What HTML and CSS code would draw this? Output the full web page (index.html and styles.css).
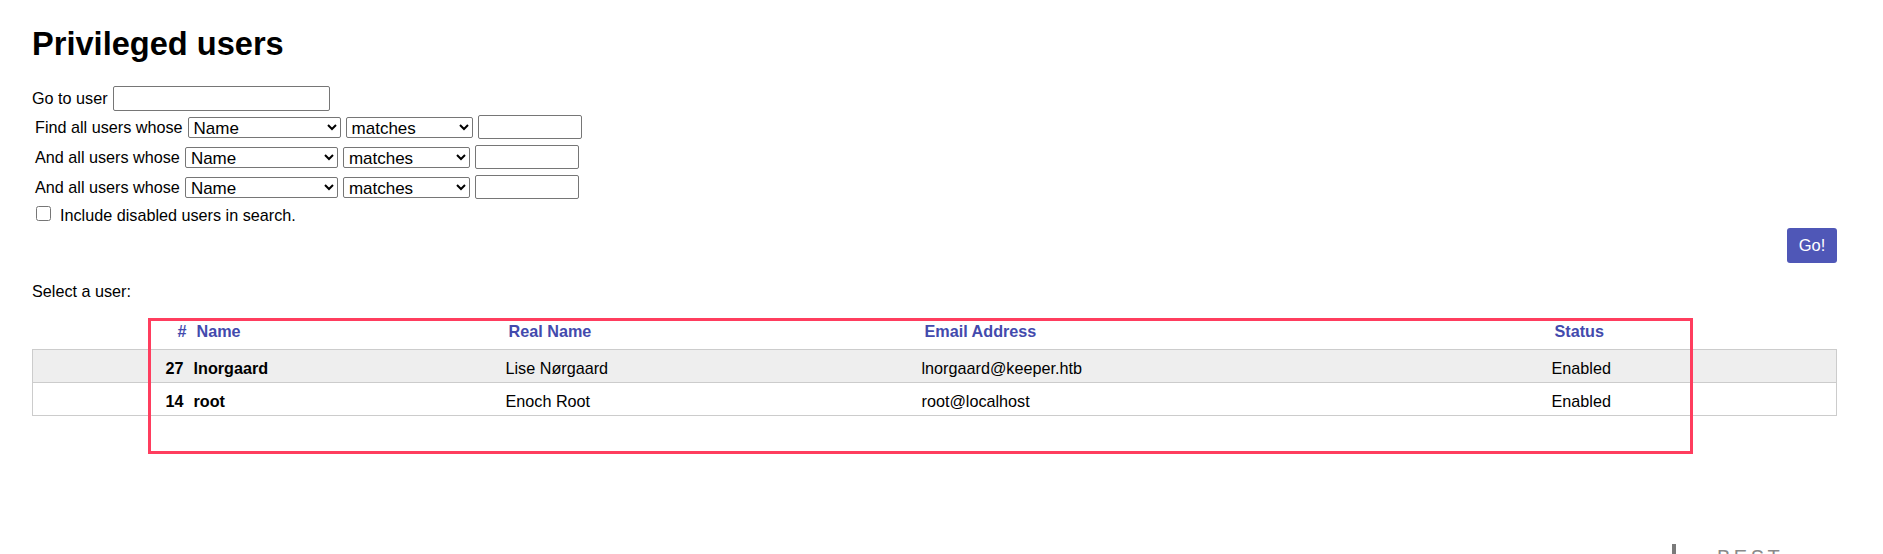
FILE: index.html
```html
<!DOCTYPE html>
<html lang="en">
<head>
<meta charset="utf-8">
<title>Privileged users</title>
<link rel="stylesheet" href="styles.css">
</head>
<body>
<div class="page">
  <h1 class="title">Privileged users</h1>

  <form class="search">
    <div class="goto">
      <label class="goto-label" for="goto">Go to user</label>
      <input class="goto-input" id="goto" type="text">
    </div>

    <div class="criteria">
      <div class="crit-row">
        <span class="crit-label">Find all users whose</span>
        <select class="field"><option selected>Name</option><option>EmailAddress</option><option>RealName</option></select>
        <select class="op"><option selected>matches</option><option>doesn't match</option><option>is</option><option>isn't</option></select>
        <input class="value" type="text">
      </div>
      <div class="crit-row">
        <span class="crit-label">And all users whose</span>
        <select class="field"><option selected>Name</option><option>EmailAddress</option><option>RealName</option></select>
        <select class="op"><option selected>matches</option><option>doesn't match</option><option>is</option><option>isn't</option></select>
        <input class="value" type="text">
      </div>
      <div class="crit-row">
        <span class="crit-label">And all users whose</span>
        <select class="field"><option selected>Name</option><option>EmailAddress</option><option>RealName</option></select>
        <select class="op"><option selected>matches</option><option>doesn't match</option><option>is</option><option>isn't</option></select>
        <input class="value" type="text">
      </div>
      <label class="check-row">
        <input class="check" type="checkbox">
        <span>Include disabled users in search.</span>
      </label>
    </div>

    <div class="submit-row">
      <button class="go" type="button">Go!</button>
    </div>
  </form>

  <p class="select-label">Select a user:</p>

  <table class="collection">
    <colgroup>
      <col class="c-id"><col class="c-name"><col class="c-real"><col class="c-email"><col class="c-status">
    </colgroup>
    <thead>
      <tr>
        <th class="num">#</th>
        <th>Name</th>
        <th>Real Name</th>
        <th>Email Address</th>
        <th>Status</th>
      </tr>
    </thead>
    <tbody>
      <tr class="odd">
        <td class="num strong">27</td>
        <td class="strong">lnorgaard</td>
        <td>Lise Nørgaard</td>
        <td>lnorgaard@keeper.htb</td>
        <td>Enabled</td>
      </tr>
      <tr class="even">
        <td class="num strong">14</td>
        <td class="strong">root</td>
        <td>Enoch Root</td>
        <td>root@localhost</td>
        <td>Enabled</td>
      </tr>
    </tbody>
  </table>

  <div class="highlight"></div>

  <div class="footer">
    <div class="logo">
      <span class="logo-bar"></span>
      <span class="logo-text">BEST</span>
    </div>
  </div>
</div>
</body>
</html>
```

FILE: styles.css
```css
html, body {
  margin: 0;
  padding: 0;
  background: #ffffff;
}

body {
  font-family: "Liberation Sans", Arial, sans-serif;
  font-size: 16.2px;
  line-height: 19px;
  color: #000000;
  overflow: hidden;
}

.page {
  position: relative;
  padding: 25px 46px 0 32px;
}

.title {
  margin: 0;
  font-size: 32.6px;
  line-height: 37px;
  font-weight: bold;
}

.search {
  margin: 0;
}

.goto {
  display: flex;
  align-items: center;
  gap: 5px;
  margin-top: 24px;
  height: 25px;
}

.goto-input {
  box-sizing: border-box;
  width: 217px;
  height: 25px;
  margin: 0;
  border: 1px solid #767676;
  border-radius: 2px;
  padding: 1px 3px;
  font: inherit;
}

.criteria {
  display: flex;
  flex-direction: column;
  gap: 6px;
  margin-top: 4px;
  padding-left: 3px;
}

.crit-row {
  display: flex;
  align-items: center;
  height: 24px;
  gap: 5px;
}

.crit-label {
  margin-right: 0;
}

.field,
.op {
  box-sizing: border-box;
  height: 21px;
  margin: 0;
  padding: 0 0 0 1px;
  font-family: "Liberation Sans", Arial, sans-serif;
  font-size: 17px;
  line-height: normal;
  color: #000;
  border: 1px solid #767676;
  border-radius: 2px;
  background: #fff;
}

.field {
  width: 153px;
}

.op {
  width: 127px;
}

.value {
  box-sizing: border-box;
  width: 104px;
  height: 24px;
  margin: 0;
  border: 1px solid #767676;
  border-radius: 2px;
  padding: 1px 3px;
  font: inherit;
}

.check-row {
  display: flex;
  align-items: flex-start;
  gap: 9px;
  margin-top: 1px;
  padding-left: 1px;
  height: 19px;
}

.check {
  width: 15px;
  height: 15px;
  margin: 0;
}

.submit-row {
  display: flex;
  justify-content: flex-end;
  margin-top: 3px;
}

.go {
  box-sizing: border-box;
  height: 35px;
  width: 50px;
  padding: 0;
  border: none;
  border-radius: 3px;
  background: #4f57b7;
  color: #ffffff;
  font-family: "Liberation Sans", Arial, sans-serif;
  font-size: 16.5px;
}

.select-label {
  margin: 19px 0 0 0;
}

.collection {
  width: 100%;
  margin-top: 12px;
  border-collapse: collapse;
  table-layout: fixed;
}

.c-id { width: 156px; }
.c-name { width: 312px; }
.c-real { width: 416px; }
.c-email { width: 630px; }
.c-status { width: auto; }

.collection th {
  padding: 9px 2px 8px 8px;
  text-align: left;
  font-weight: bold;
  color: #434aad;
  white-space: nowrap;
}

.collection th.num {
  text-align: right;
}

.collection td {
  padding: 9px 5px 4px 5px;
  text-align: left;
  border-top: 1px solid #cccccc;
  border-bottom: 1px solid #cccccc;
  white-space: nowrap;
}

.collection td:first-child {
  border-left: 1px solid #cccccc;
}

.collection td:last-child {
  border-right: 1px solid #cccccc;
}

.collection td.num {
  text-align: right;
}

.collection td.strong {
  font-weight: bold;
}

.collection tr.odd td {
  background: #eeeeee;
}

.collection tr.even td {
  background: #ffffff;
}

.highlight {
  position: absolute;
  left: 148px;
  top: 318px;
  width: 1545px;
  height: 136px;
  box-sizing: border-box;
  border: 3px solid #ff3d5e;
  pointer-events: none;
}

.footer {
  display: flex;
  justify-content: flex-end;
  margin-top: 128px;
  padding-right: 37px;
}

.logo {
  display: flex;
  align-items: flex-start;
  gap: 41px;
  width: 128px;
}

.logo-bar {
  display: block;
  width: 4px;
  height: 30px;
  background: #7a7a7a;
}

.logo-text {
  padding-top: 3px;
  font-size: 20px;
  line-height: 20px;
  letter-spacing: 3.5px;
  color: #8a8a8a;
}
```
